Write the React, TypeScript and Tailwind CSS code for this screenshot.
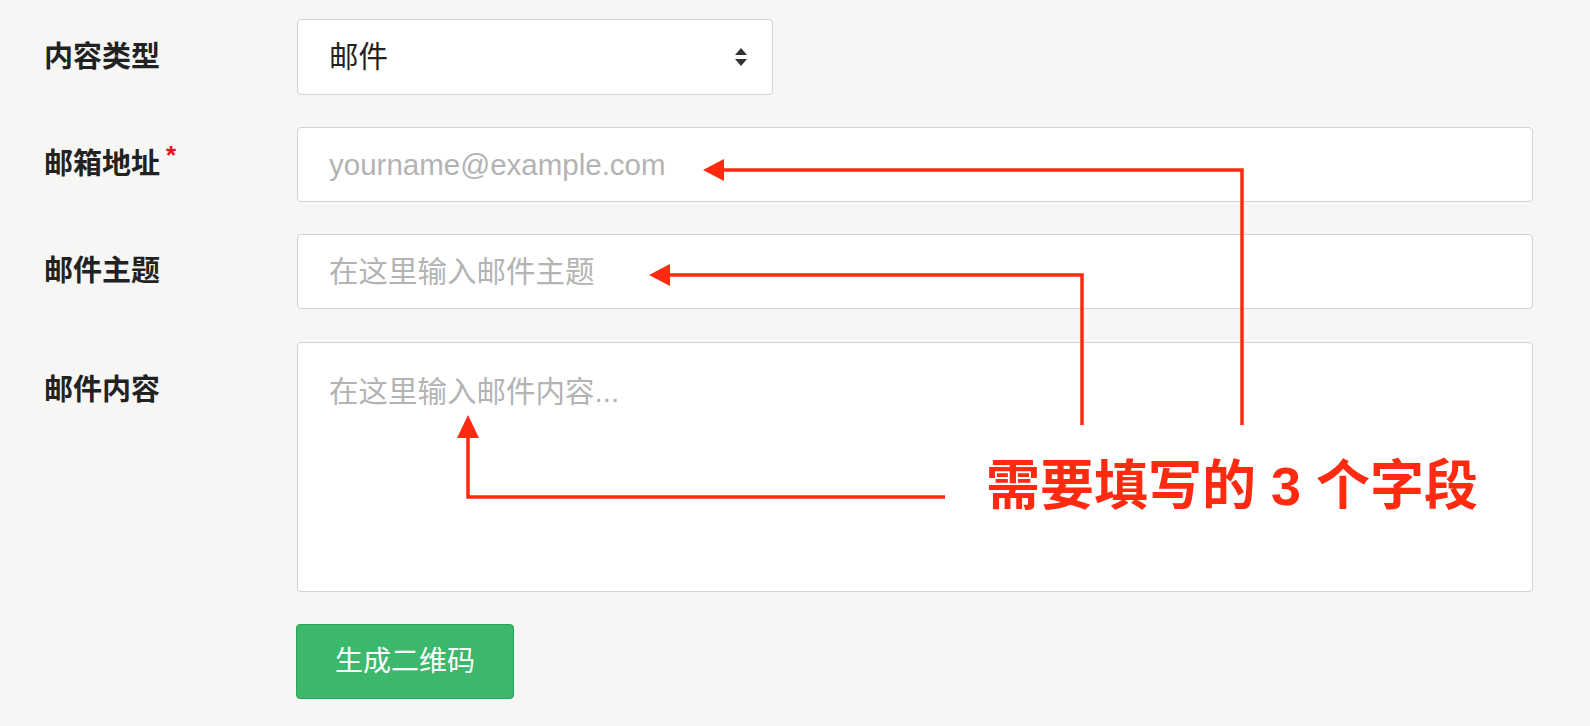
import type { ReactNode } from "react";

const FONT = { fontFamily: '"Liberation Sans", "Noto Sans CJK SC", sans-serif' };

function Row({ label, required, className = "", labelClass = "h-[75px] items-center", children }: { label: string; required?: boolean; className?: string; labelClass?: string; children: ReactNode }) {
  return (
    <div className={`flex items-start ${className}`}>
      <div className={`flex w-[253px] shrink-0 ${labelClass}`}>
        <span className="text-[29px] font-bold leading-none text-[#222]">{label}</span>
        {required && <span className="ml-[6px] -mt-5 text-[26px] font-bold leading-none text-[#e0121b]">*</span>}
      </div>
      {children}
    </div>
  );
}

function Annotations() {
  const red = "#ff2a10";
  return (
    <svg className="pointer-events-none absolute left-0 top-0" width="1590" height="726" viewBox="0 0 1590 726">
      <g fill="none" stroke={red} strokeWidth="3.5">
        <polyline points="1242,425 1242,170 718,170" />
        <polyline points="1082,425 1082,275 664,275" />
        <polyline points="945,497 468,497 468,432" />
      </g>
      <g fill={red}>
        <polygon points="703,170 724,159 724,181" />
        <polygon points="649,275 670,264 670,286" />
        <polygon points="468,415 457,438 479,438" />
      </g>
    </svg>
  );
}

export default function App() {
  return (
    <div className="relative h-[726px] w-[1590px] overflow-hidden bg-[#f6f6f4]" style={FONT}>
      <div className="flex flex-col gap-[32px] pl-[44px] pr-[57px] pt-[19px]">
        <Row label="内容类型" labelClass="h-[76px] items-center">
          <div className="flex h-[76px] w-[476px] items-center justify-between rounded-[4px] border border-[#d2d2d2] bg-white pl-[31px] pr-[24px]">
            <span className="text-[29.5px] leading-none text-[#222]">邮件</span>
            <svg width="14" height="20" viewBox="0 0 14 20">
              <polygon points="7,1 13,8 1,8" fill="#333" />
              <polygon points="1,12 13,12 7,19" fill="#333" />
            </svg>
          </div>
        </Row>
        <Row label="邮箱地址" required>
          <div className="flex h-[75px] flex-1 items-center rounded-[4px] border border-[#d2d2d2] bg-white pl-[31px]">
            <span className="text-[29.5px] leading-none text-[#b3b3b3]">yourname@example.com</span>
          </div>
        </Row>
        <Row label="邮件主题">
          <div className="flex h-[75px] flex-1 items-center rounded-[4px] border border-[#d2d2d2] bg-white pl-[31px]">
            <span className="text-[29.5px] leading-none text-[#b3b3b3]">在这里输入邮件主题</span>
          </div>
        </Row>
        <Row label="邮件内容" className="mt-px" labelClass="pt-[34px]">
          <div className="h-[250px] flex-1 rounded-[4px] border border-[#d2d2d2] bg-white pl-[31px] pt-[34px]">
            <span className="text-[29.5px] leading-none text-[#b3b3b3]">在这里输入邮件内容...</span>
          </div>
        </Row>
        <div className="pl-[252px]">
          <button className="flex h-[75px] w-[218px] items-center justify-center rounded-[4px] border border-[#27a556] bg-[#3bb86c] text-[28px] leading-none text-white">
            生成二维码
          </button>
        </div>
      </div>
      <Annotations />
      <div className="absolute left-[986px] top-[459px] text-[54px] font-bold leading-none text-[#ff2a10]">需要填写的 3 个字段</div>
    </div>
  );
}
